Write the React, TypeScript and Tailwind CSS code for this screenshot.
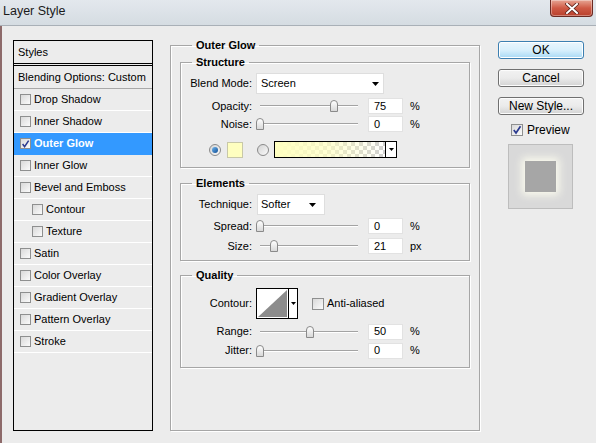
import React from "react";

function Check({ checked, size = 12 }: { checked?: boolean; size?: number }) {
  return (
    <span
      className={`flex shrink-0 items-center justify-center border border-[#8e8f8f] bg-linear-to-br from-[#d9d9d9] to-[#fbfbfb] ${
        size === 11 ? "h-[11px] w-[11px]" : "h-[12px] w-[12px]"
      }`}
    >
      {checked && (
        <svg viewBox="0 0 10 10" className="h-[10px] w-[10px]">
          <path d="M1.8 5 L4 8 L8.5 1.2" fill="none" stroke="#2b3a8f" strokeWidth="1.7" />
        </svg>
      )}
    </span>
  );
}

function Radio({ on }: { on?: boolean }) {
  return (
    <span className="flex h-[12px] w-[12px] shrink-0 items-center justify-center rounded-full border border-[#8a8a8a] bg-linear-to-br from-[#d4d4d4] to-[#fafafa]">
      {on && <span className="h-[6px] w-[6px] rounded-full bg-linear-to-br from-[#6fb6ef] to-[#0e4f95]" />}
    </span>
  );
}

function Arrow() {
  return (
    <svg viewBox="0 0 7 4" className="h-[4px] w-[7px]">
      <path d="M0 0 H7 L3.5 4 Z" fill="#000" />
    </svg>
  );
}

function Slider({ pos }: { pos: number }) {
  return (
    <div className="relative ml-[4px] flex h-full w-[106px] items-center px-[4px]">
      <div className="h-[2px] w-full border-t border-[#a3a3a3] border-b border-b-white" />
      <span
        className="absolute top-1/2 h-[12px] w-[8px] -translate-y-1/2 rounded-t-full rounded-b-[1px] border border-[#8a8a8a] bg-linear-to-b from-white to-[#d8d8d8]"
        style={{ left: pos }}
      />
    </div>
  );
}

function SliderRow({ label, value, unit, pos, h }: { label: string; value: string; unit: string; pos: number; h: string }) {
  return (
    <div className={`flex items-center ${h}`}>
      <span className="w-[71px] text-right">{label}</span>
      <Slider pos={pos} />
      <span className="ml-[6px] flex h-[16px] w-[35px] items-center border border-[#e2e2e2] bg-white pl-[5px]">{value}</span>
      <span className="ml-[7px]">{unit}</span>
    </div>
  );
}

function ListRow({ label, indent, active, checkbox = true }: { label: string; indent?: boolean; active?: boolean; checkbox?: boolean }) {
  return (
    <div
      className={`flex h-[22px] items-center border-b ${
        active ? "border-b-[#3399ff] bg-[#3399ff] font-bold text-white" : "border-b-white"
      } ${indent ? "pl-[18px]" : "pl-[6px]"}`}
    >
      {checkbox && <Check size={11} checked={active} />}
      <span className="ml-[3px]">{label}</span>
    </div>
  );
}

export default function App() {
  const list: { label: string; indent?: boolean; active?: boolean }[] = [
    { label: "Drop Shadow" },
    { label: "Inner Shadow" },
    { label: "Outer Glow", active: true },
    { label: "Inner Glow" },
    { label: "Bevel and Emboss" },
    { label: "Contour", indent: true },
    { label: "Texture", indent: true },
    { label: "Satin" },
    { label: "Color Overlay" },
    { label: "Gradient Overlay" },
    { label: "Pattern Overlay" },
    { label: "Stroke" },
  ];

  const fs = "border border-[#a6a6a6] shadow-[inset_1px_1px_0_#fff,1px_1px_0_#fff]";
  const lg = "px-[4px] text-[11px] leading-[14px] font-bold";

  return (
    <div className="flex h-[443px] w-[596px] flex-col overflow-hidden bg-[#ececec] font-['Liberation_Sans',Arial,sans-serif] text-[11px] text-black">
      {/* title bar */}
      <div className="flex h-[26px] shrink-0 items-start justify-between border-b border-[#a9b0b7] bg-linear-to-b from-[#e3e8ed] to-[#d5dce2] pr-[3px]">
        <span className="pl-[3px] pt-[4px] text-[12.5px] leading-[15px] text-[#1a1a1a]">Layer Style</span>
        <div className="flex h-[17px] w-[43px] items-center justify-center rounded-b-[4px] border border-t-0 border-[#6b2a22] bg-linear-to-b from-[#e6a594] via-[#cf5a45] to-[#b8402c] shadow-[inset_0_0_0_1px_rgba(255,255,255,0.35)]">
          <svg viewBox="0 0 14 11" className="h-[11px] w-[14px]">
            <path d="M2 1 L12 10 M12 1 L2 10" stroke="#5a2018" strokeWidth="3.6" strokeLinecap="square" />
            <path d="M2 1 L12 10 M12 1 L2 10" stroke="#fff" strokeWidth="2" strokeLinecap="square" />
          </svg>
        </div>
      </div>

      {/* body */}
      <div className="flex flex-1 items-start border-l-[2px] border-[#8d6a6a]">
        {/* styles list */}
        <div className="ml-[11px] mt-[14px] flex h-[391px] w-[140px] flex-col border border-black">
          <div className="flex h-[22px] items-center pl-[4px]">Styles</div>
          <div className="h-[3px] border-b-[3px] border-double border-black" />
          <div className="flex h-[23px] items-center border-b border-b-[#a8a8a8] pl-[4px]">Blending Options: Custom</div>
          {list.map((r) => (
            <ListRow key={r.label} {...r} />
          ))}
        </div>

        {/* outer glow panel */}
        <fieldset className={`ml-[17px] mt-[12px] flex h-[393px] w-[310px] flex-col px-[9px] ${fs}`}>
          <legend className={`ml-[12px] ${lg}`}>Outer Glow</legend>

          <fieldset className={`mt-[3px] px-0 pb-[9px] pt-[4px] ${fs}`}>
            <legend className={`ml-[11px] ${lg}`}>Structure</legend>
            <div className="flex h-[21px] items-center">
              <span className="w-[71px] text-right">Blend Mode:</span>
              <div className="ml-[4px] flex h-[21px] w-[128px] items-center justify-between border border-[#dedede] bg-white pl-[4px] pr-[4px]">
                <span>Screen</span>
                <Arrow />
              </div>
            </div>
            <div className="mt-[3px]">
              <SliderRow label="Opacity:" value="75" unit="%" pos={74} h="h-[18px]" />
              <SliderRow label="Noise:" value="0" unit="%" pos={0} h="h-[18px]" />
            </div>
            <div className="mt-[8px] flex h-[17px] items-center">
              <span className="ml-[28px]">
                <Radio on />
              </span>
              <span className="ml-[6px] h-[16px] w-[16px] border border-[#c8c8a8] bg-[#ffffc0]" />
              <span className="ml-[14px]">
                <Radio />
              </span>
              <div className="ml-[5px] flex h-[17px] w-[123px] border border-black">
                <div className="h-full flex-1 bg-[repeating-conic-gradient(#d0d0d0_0_25%,#ffffff_0_50%)] bg-[length:8px_8px]">
                  <div className="h-full w-full bg-linear-to-r from-[#ffffc0] via-[#ffffc0b0] to-[#ffffc000]" />
                </div>
                <div className="flex w-[11px] items-center justify-center border-l border-black bg-white">
                  <svg viewBox="0 0 5 3" className="h-[3px] w-[5px]">
                    <path d="M0 0 H5 L2.5 3 Z" fill="#000" />
                  </svg>
                </div>
              </div>
            </div>
          </fieldset>

          <fieldset className={`mt-[8px] pb-[4px] pt-[4px] ${fs}`}>
            <legend className={`ml-[11px] ${lg}`}>Elements</legend>
            <div className="flex h-[21px] items-center">
              <span className="w-[71px] text-right">Technique:</span>
              <div className="ml-[5px] flex h-[21px] w-[68px] items-center justify-between border border-[#dedede] bg-white pl-[3px] pr-[8px]">
                <span>Softer</span>
                <Arrow />
              </div>
            </div>
            <div className="mt-[1px]">
              <SliderRow label="Spread:" value="0" unit="%" pos={0} h="h-[20px]" />
              <SliderRow label="Size:" value="21" unit="px" pos={14} h="h-[20px]" />
            </div>
          </fieldset>

          <fieldset className={`mt-[7px] pb-[7px] pt-[6px] ${fs}`}>
            <legend className={`ml-[11px] ${lg}`}>Quality</legend>
            <div className="flex h-[31px] items-center">
              <span className="w-[71px] text-right">Contour:</span>
              <div className="ml-[4px] flex h-[31px] w-[42px] border border-black bg-white">
                <svg viewBox="0 0 31 29" preserveAspectRatio="none" className="h-full w-[31px]">
                  <rect width="31" height="29" fill="#fff" />
                  <path d="M1 28 L30 1 L30 28 Z" fill="#8c8c8c" />
                </svg>
                <div className="flex flex-1 items-center justify-center border-l border-black">
                  <svg viewBox="0 0 5 3" className="h-[3px] w-[5px]">
                    <path d="M0 0 H5 L2.5 3 Z" fill="#000" />
                  </svg>
                </div>
              </div>
              <span className="ml-[14px]">
                <Check />
              </span>
              <span className="ml-[3px]">Anti-aliased</span>
            </div>
            <div className="mt-[3px]">
              <SliderRow label="Range:" value="50" unit="%" pos={50} h="h-[19px]" />
              <SliderRow label="Jitter:" value="0" unit="%" pos={0} h="h-[19px]" />
            </div>
          </fieldset>
        </fieldset>

        {/* right column */}
        <div className="ml-[18px] mt-[15px] flex w-[86px] flex-col text-[12px]">
          <button className="flex h-[18px] items-center justify-center rounded-[3px] border border-[#3c7fb1] bg-linear-to-b from-[#eaf6fd] via-[#d9f0fc] to-[#a7d9f5] shadow-[inset_0_0_0_1px_#fff]">
            OK
          </button>
          <button className="mt-[10px] flex h-[18px] items-center justify-center rounded-[3px] border border-[#707070] bg-linear-to-b from-[#f2f2f2] via-[#ebebeb] to-[#d3d3d3] shadow-[inset_0_0_0_1px_#fcfcfc]">
            Cancel
          </button>
          <button className="mt-[10px] flex h-[18px] items-center justify-center rounded-[3px] border border-[#707070] bg-linear-to-b from-[#f2f2f2] via-[#ebebeb] to-[#d3d3d3] shadow-[inset_0_0_0_1px_#fcfcfc]">
            New Style...
          </button>
          <div className="ml-[13px] mt-[8px] flex h-[13px] items-center">
            <Check checked />
            <span className="ml-[4px]">Preview</span>
          </div>
          <div className="ml-[10px] mt-[8px] flex h-[65px] w-[65px] items-center justify-center border border-[#bdbdbd] bg-[#d9d9d9]">
            <div className="h-[31px] w-[31px] bg-[#a6a6a6] shadow-[0_0_8px_3px_#fbfbee]" />
          </div>
        </div>
      </div>
    </div>
  );
}
